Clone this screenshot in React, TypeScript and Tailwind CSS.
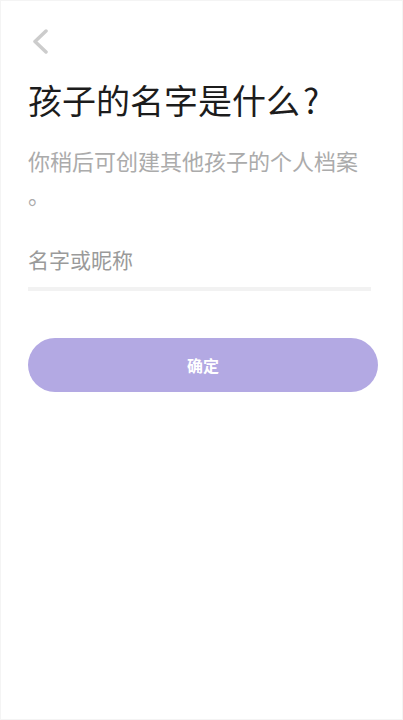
import React from "react";

export default function App() {
  return (
    <div
      className="w-[403px] h-[720px] bg-white flex flex-col px-[27px] border border-[#f4f4f4]"
      style={{ fontFamily: '"Noto Sans CJK SC", "Noto Sans", sans-serif' }}
    >
      <div className="pt-[28px] h-[56px]">
        <svg width="17" height="25" viewBox="0 0 17 25" className="ml-[4px]">
          <path d="M14 2 L3 12.5 L14 23" fill="none" stroke="#cccccc" strokeWidth="3.5" strokeLinecap="round" strokeLinejoin="round" />
        </svg>
      </div>
      <h1 className="mt-[21px] text-[34px] leading-[44px] text-[#1c1c1c] font-normal whitespace-nowrap">
        孩子的名字是什么<span className="ml-[3px]">?</span>
      </h1>
      <p className="mt-[21px] text-[22px] leading-[34px] text-[#ababab] w-[349px]">
        你稍后可创建其他孩子的个人档案
        <br />。
      </p>
      <div className="mt-[32px] pb-[12px] border-b-[4px] border-[#f2f2f2] w-[343px]">
        <div className="text-[21px] leading-[32px] text-[#9a9a9a]">名字或昵称</div>
      </div>
      <button className="mt-[47px] h-[54px] w-[350px] rounded-full bg-[#b3a9e3] text-white text-[16px] font-bold flex items-center justify-center">
        确定
      </button>
    </div>
  );
}
